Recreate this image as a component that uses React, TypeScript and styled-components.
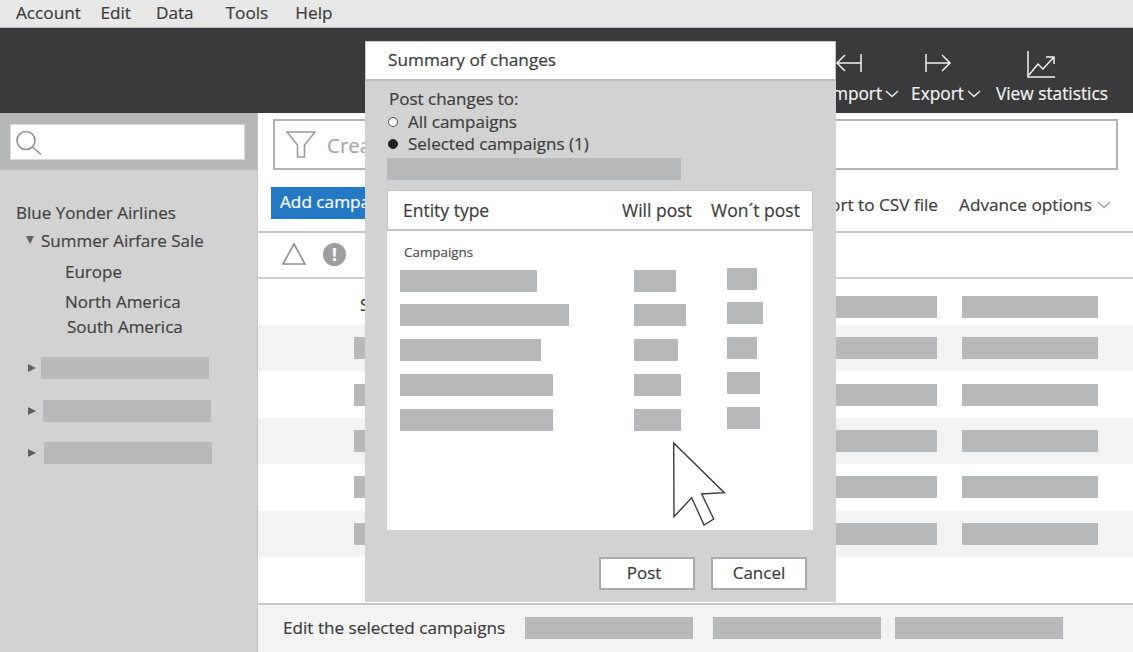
import React from 'react';
import styled, { createGlobalStyle } from 'styled-components';

const GlobalStyle = createGlobalStyle`
  html, body {
    margin: 0;
    padding: 0;
    width: 1133px;
    height: 652px;
    overflow: hidden;
    background: #fff;
    font-family: 'Open Sans', 'Noto Sans', sans-serif;
    color: #3c3c3c;
    -webkit-text-stroke: 0.2px;
  }
  * { box-sizing: border-box; }
`;

const Page = styled.div`
  position: relative;
  width: 1133px;
  height: 652px;
  display: flex;
  flex-direction: column;
  overflow: hidden;
`;

const MenuBar = styled.div`
  height: 28px;
  background: #e8e8e8;
  border-bottom: 1px solid #bdbdbd;
  display: flex;
  align-items: center;
  padding: 0 0 3px 16px;
  font-size: 17.2px;
  color: #3c3c3c;
`;

const MenuItem = styled.span<{ $gap: number }>`
  margin-right: ${p => p.$gap}px;
`;

const Ribbon = styled.div`
  height: 85px;
  background: #3a3a3c;
  display: flex;
  justify-content: flex-end;
  align-items: flex-start;
  padding: 22px 25px 0 0;
  color: #f2f2f2;
  font-size: 17.3px;
`;

const RibbonItem = styled.div<{ $gap?: number }>`
  display: flex;
  flex-direction: column;
  align-items: flex-start;
  white-space: nowrap;
  margin-right: ${p => p.$gap ?? 0}px;
`;

const RibbonIcon = styled.div<{ $left: number }>`
  height: 33px;
  padding-left: ${p => p.$left}px;
`;

const RibbonLabel = styled.div`
  display: flex;
  align-items: center;
  gap: 3px;
  line-height: 22px;
`;

const Body = styled.div`
  flex: 1;
  display: flex;
  min-height: 0;
`;

const Sidebar = styled.aside`
  width: 258px;
  background: #d2d2d2;
  border-right: 1px solid #c4c4c4;
  display: flex;
  flex-direction: column;
`;

const SearchWell = styled.div`
  height: 57px;
  background: #b5b6b6;
  padding: 11px 12px 10px 10px;
`;

const SearchInput = styled.div`
  height: 36px;
  background: #fff;
  border: 1px solid #d8d8d8;
  padding: 5px 0 0 5px;
`;

const Tree = styled.div`
  padding: 28px 0 0 16px;
  font-size: 17px;
  color: #424242;
`;

const TreeRow = styled.div<{ $indent: number; $height: number }>`
  display: flex;
  align-items: center;
  height: ${p => p.$height}px;
  margin-left: ${p => p.$indent}px;
  white-space: nowrap;
`;

const Caret = styled.span<{ $open?: boolean }>`
  width: 0;
  height: 0;
  margin-right: ${p => (p.$open ? 7 : 0)}px;
  ${p =>
    p.$open
      ? `border-left: 4px solid transparent; border-right: 4px solid transparent; border-top: 8px solid #606060;`
      : `border-top: 4px solid transparent; border-bottom: 4px solid transparent; border-left: 8px solid #606060;`}
`;

const Placeholder = styled.div<{ $w: number; $h?: number }>`
  width: ${p => p.$w}px;
  height: ${p => p.$h ?? 22}px;
  background: #b7b8b9;
  flex-shrink: 0;
`;

const CollapsedList = styled.div`
  display: flex;
  flex-direction: column;
  gap: 20.5px;
  padding: 18px 0 0 28px;
`;

const CollapsedRow = styled.div<{ $pad: number }>`
  display: flex;
  align-items: center;
  gap: ${p => p.$pad}px;
`;

const Main = styled.main`
  flex: 1;
  display: flex;
  flex-direction: column;
  min-width: 0;
`;

const FilterArea = styled.div`
  height: 57px;
  padding: 6px 15px 0 15px;
`;

const FilterBox = styled.div`
  height: 51px;
  border: 2px solid #b4b4b4;
  background: #fff;
  display: flex;
  align-items: center;
  gap: 11px;
  padding-left: 11px;
  font-size: 20.5px;
  color: #a8a8a8;
`;

const ActionBar = styled.div`
  height: 63px;
  border-bottom: 2px solid #c4c4c4;
  display: flex;
  align-items: flex-start;
  padding: 17px 0 0 13px;
  font-size: 17.2px;
`;

const AddButton = styled.div`
  width: 130px;
  height: 32px;
  background: #2479c4;
  color: #fff;
  line-height: 30px;
  padding-left: 9px;
  white-space: nowrap;
`;

const ActionLink = styled.div<{ $left: number }>`
  margin: 6px 0 0 ${p => p.$left}px;
  line-height: 24px;
  white-space: nowrap;
  display: flex;
  align-items: center;
  gap: 5px;
`;

const AlertBar = styled.div`
  height: 46px;
  border-bottom: 2px solid #d0d0d0;
  display: flex;
  align-items: center;
  gap: 16px;
  padding: 0 0 2px 23px;
`;

const AlertBadge = styled.span`
  width: 23px;
  height: 23px;
  border-radius: 50%;
  background: #9d9d9d;
  color: #fff;
  font-size: 17px;
  font-weight: 700;
  line-height: 23px;
  text-align: center;
`;

const Table = styled.div`
  flex: 1;
  display: flex;
  flex-direction: column;
`;

const TableRow = styled.div<{ $striped?: boolean; $height: number; $header?: boolean }>`
  height: ${p => p.$height}px;
  background: ${p => (p.$striped ? '#f3f3f3' : '#fff')};
  display: flex;
  align-items: ${p => (p.$header ? 'flex-end' : 'center')};
  padding: 0 35px ${p => (p.$header ? 7 : 0)}px 96px;
  gap: 25px;
  font-size: 17px;
`;

const RowStart = styled.div`
  flex: 1;
`;

const HeaderInitial = styled(RowStart)`
  padding-left: 6px;
  line-height: 22px;
  margin-bottom: 2px;
`;

const Footer = styled.div`
  height: 49px;
  background: #f3f3f3;
  border-top: 2px solid #c8c8c8;
  display: flex;
  align-items: center;
  padding: 0 0 2px 25px;
  font-size: 17.15px;
  color: #3c3c3c;
`;

const FooterLabel = styled.span`
  width: 242px;
  white-space: nowrap;
`;

const FooterBars = styled.div`
  display: grid;
  grid-template-columns: 188px 182px 168px;
`;

const Modal = styled.section`
  position: absolute;
  left: 365px;
  top: 41px;
  width: 471px;
  height: 561px;
  background: #d2d2d2;
  font-size: 17px;
  color: #3c3c3c;
  display: flex;
  flex-direction: column;
`;

const ModalTitle = styled.div`
  height: 40px;
  background: #fff;
  border: 1px solid #c9c9c9;
  border-bottom: 2px solid #b9b9b9;
  padding-left: 22px;
  line-height: 36px;
  font-size: 17.2px;
`;

const PostTo = styled.div`
  padding: 7px 0 0 24px;
  line-height: 22.5px;
`;

const RadioRow = styled.div`
  display: flex;
  align-items: center;
  gap: 10px;
  margin-left: -1px;
`;

const Radio = styled.span<{ $checked?: boolean }>`
  width: 10px;
  height: 10px;
  border-radius: 50%;
  background: ${p => (p.$checked ? '#1f1f1f' : '#fff')};
  border: 1px solid ${p => (p.$checked ? '#1f1f1f' : '#555')};
`;

const SelectionBar = styled.div`
  margin: 2px 0 0 22px;
`;

const SummaryPanel = styled.div`
  margin: 10px 0 0 22px;
  width: 426px;
  height: 340px;
  background: #fff;
  display: flex;
  flex-direction: column;
`;

const SummaryHead = styled.div`
  height: 41px;
  border: 1px solid #c4c4c4;
  border-bottom-width: 2px;
  display: grid;
  grid-template-columns: 219px 89px 1fr;
  align-items: center;
  padding-left: 15px;
  font-size: 17.5px;
  white-space: nowrap;
`;

const SummarySection = styled.div`
  padding: 13px 0 0 17px;
  font-size: 13.4px;
  line-height: 17px;
  color: #505050;
`;

const SummaryGrid = styled.div`
  display: grid;
  grid-template-columns: 234px 93px 1fr;
  row-gap: 12.8px;
  padding: 9px 0 0 13px;
`;

const LiftedBar = styled(Placeholder)`
  margin-top: -2px;
`;

const ModalActions = styled.div`
  display: flex;
  justify-content: flex-end;
  gap: 16px;
  padding: 27px 29px 0 0;
`;

const ModalButton = styled.div<{ $inset?: number }>`
  width: 96px;
  height: 33px;
  background: #fff;
  border: 2px solid #a9a9a9;
  text-align: center;
  line-height: 27px;
  padding-right: ${p => p.$inset ?? 0}px;
`;

const PointerIcon = styled.svg`
  position: absolute;
  left: 670px;
  top: 440px;
`;

const Chevron = ({ color = '#f2f2f2' }: { color?: string }) => (
  <svg width="14" height="8" viewBox="0 0 14 8" fill="none" stroke={color} strokeWidth="1.4">
    <path d="M1 1l6 5.5L13 1" />
  </svg>
);

const modalRows = [
  { name: 137, will: 42, wont: 30 },
  { name: 169, will: 52, wont: 36 },
  { name: 141, will: 44, wont: 30 },
  { name: 153, will: 47, wont: 33 },
  { name: 153, will: 47, wont: 33 },
];

export default function App() {
  return (
    <Page>
      <GlobalStyle />
      <MenuBar>
        <MenuItem $gap={19.5}>Account</MenuItem>
        <MenuItem $gap={25}>Edit</MenuItem>
        <MenuItem $gap={32}>Data</MenuItem>
        <MenuItem $gap={27}>Tools</MenuItem>
        <MenuItem $gap={0}>Help</MenuItem>
      </MenuBar>

      <Ribbon>
        <RibbonItem $gap={12}>
          <RibbonIcon $left={7}>
            <svg width="30" height="26" viewBox="0 0 30 26" fill="none" stroke="#f2f2f2" strokeWidth="1.5">
              <path d="M27 4v18M27 13H3M11 5l-8 8 8 8" />
            </svg>
          </RibbonIcon>
          <RibbonLabel>Import<Chevron /></RibbonLabel>
        </RibbonItem>
        <RibbonItem $gap={15}>
          <RibbonIcon $left={12}>
            <svg width="30" height="26" viewBox="0 0 30 26" fill="none" stroke="#f2f2f2" strokeWidth="1.5">
              <path d="M3 4v18M3 13h24M19 5l8 8-8 8" />
            </svg>
          </RibbonIcon>
          <RibbonLabel>Export<Chevron /></RibbonLabel>
        </RibbonItem>
        <RibbonItem>
          <RibbonIcon $left={30}>
            <svg width="30" height="29" viewBox="0 0 30 29" fill="none" stroke="#f2f2f2" strokeWidth="1.5">
              <path d="M2 1v26h27M3 25l9-11 5 5 10-11M20 7h8v7" />
            </svg>
          </RibbonIcon>
          <RibbonLabel>View statistics</RibbonLabel>
        </RibbonItem>
      </Ribbon>

      <Body>
        <Sidebar>
          <SearchWell>
            <SearchInput>
              <svg width="27" height="26" viewBox="0 0 27 26" fill="none" stroke="#8f8f8f" strokeWidth="1.6">
                <circle cx="10" cy="10.5" r="9" />
                <path d="M16.5 17L25 24.5" />
              </svg>
            </SearchInput>
          </SearchWell>
          <Tree>
            <TreeRow $indent={0} $height={28}>Blue Yonder Airlines</TreeRow>
            <TreeRow $indent={10} $height={28}><Caret $open />Summer Airfare Sale</TreeRow>
            <TreeRow $indent={49} $height={35}>Europe</TreeRow>
            <TreeRow $indent={49} $height={24}>North America</TreeRow>
            <TreeRow $indent={51} $height={26}>South America</TreeRow>
          </Tree>
          <CollapsedList>
            <CollapsedRow $pad={5}><Caret /><Placeholder $w={168} /></CollapsedRow>
            <CollapsedRow $pad={7}><Caret /><Placeholder $w={168} /></CollapsedRow>
            <CollapsedRow $pad={8}><Caret /><Placeholder $w={168} /></CollapsedRow>
          </CollapsedList>
        </Sidebar>

        <Main>
          <FilterArea>
            <FilterBox>
              <svg width="30" height="30" viewBox="0 0 30 30" fill="none" stroke="#9a9a9a" strokeWidth="1.6">
                <path d="M1 2h28L18.5 15v12h-7V15z" />
              </svg>
              Create
            </FilterBox>
          </FilterArea>
          <ActionBar>
            <AddButton>Add campaign</AddButton>
            <ActionLink $left={400}>Export to CSV file</ActionLink>
            <ActionLink $left={21}>
              Advance options
              <Chevron color="#a0a0a0" />
            </ActionLink>
          </ActionBar>
          <AlertBar>
            <svg width="26" height="24" viewBox="0 0 26 24" fill="none" stroke="#8f8f8f" strokeWidth="1.6">
              <path d="M13 2L24 22H2z" />
            </svg>
            <AlertBadge>!</AlertBadge>
          </AlertBar>
          <Table>
            <TableRow $height={46} $header>
              <HeaderInitial>S</HeaderInitial>
              <Placeholder $w={104} />
              <Placeholder $w={136} />
            </TableRow>
            {[true, false, true, false, true].map((striped, i) => (
              <TableRow key={i} $striped={striped} $height={46.4}>
                <RowStart><Placeholder $w={11} /></RowStart>
                <Placeholder $w={104} />
                <Placeholder $w={136} />
              </TableRow>
            ))}
            <TableRow $height={46} />
          </Table>
          <Footer>
            <FooterLabel>Edit the selected campaigns</FooterLabel>
            <FooterBars>
              <Placeholder $w={168} />
              <Placeholder $w={168} />
              <Placeholder $w={168} />
            </FooterBars>
          </Footer>
        </Main>
      </Body>

      <Modal>
        <ModalTitle>Summary of changes</ModalTitle>
        <PostTo>
          Post changes to:
          <RadioRow><Radio />All campaigns</RadioRow>
          <RadioRow><Radio $checked />Selected campaigns (1)</RadioRow>
        </PostTo>
        <SelectionBar><Placeholder $w={294} /></SelectionBar>
        <SummaryPanel>
          <SummaryHead>
            <span>Entity type</span>
            <span>Will post</span>
            <span>Won´t post</span>
          </SummaryHead>
          <SummarySection>Campaigns</SummarySection>
          <SummaryGrid>
            {modalRows.map((row, i) => (
              <React.Fragment key={i}>
                <Placeholder $w={row.name} />
                <Placeholder $w={row.will} />
                <LiftedBar $w={row.wont} />
              </React.Fragment>
            ))}
          </SummaryGrid>
        </SummaryPanel>
        <ModalActions>
          <ModalButton $inset={6}>Post</ModalButton>
          <ModalButton>Cancel</ModalButton>
        </ModalActions>
      </Modal>

      <PointerIcon width="58" height="90" viewBox="670 440 58 90" fill="#fff" stroke="#3c3c3c" strokeWidth="1.4">
        <path d="M673.7 443L674 516.7L691.7 497.7L704 525L713.7 519L701.7 494L724.3 492.7Z" />
      </PointerIcon>
    </Page>
  );
}
